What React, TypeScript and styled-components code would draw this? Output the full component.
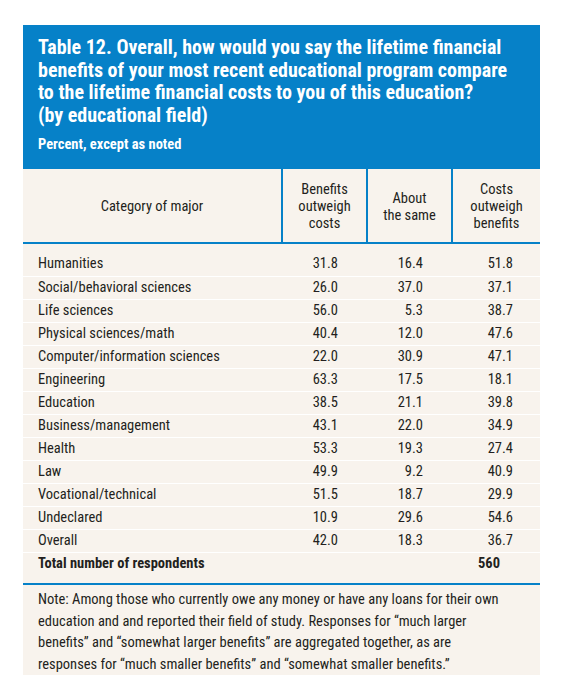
import React from "react";
import styled, { createGlobalStyle } from "styled-components";

const Global = createGlobalStyle`
  html, body { margin: 0; padding: 0; background: #ffffff; }
  body { font-family: Roboto, "Liberation Sans", Arial, sans-serif; }
`;

const BLUE = "#0681c8";
const CREAM = "#f8f3ed";
const INK = "#231f20";

const Panel = styled.section`
  margin: 25px 0 0 23px;
  width: 517px;
  background: ${CREAM};
  font-family: Roboto, "Liberation Sans", Arial, sans-serif;
  font-stretch: 80%;
  color: ${INK};
`;

const Header = styled.header`
  background: ${BLUE};
  color: #ffffff;
  height: 144px;
  box-sizing: border-box;
  padding: 11px 15px 0 15px;
`;

const Title = styled.h1`
  margin: 0;
  font-size: 20px;
  line-height: 22.5px;
  font-weight: 700;
  font-stretch: 77%;
  white-space: nowrap;
`;

const Subtitle = styled.p`
  margin: 10px 0 0 0;
  font-size: 14.5px;
  line-height: 18px;
  font-weight: 700;
  font-stretch: 76%;
`;

const Table = styled.table`
  width: 100%;
  border-collapse: collapse;
  table-layout: fixed;
  font-size: 14.5px;
`;

const HeadCell = styled.th<{ $w: number; $divider?: boolean }>`
  width: ${(p) => p.$w}px;
  height: 74px;
  padding: 2px 4px 0 4px;
  box-sizing: border-box;
  font-weight: 400;
  text-align: center;
  vertical-align: middle;
  line-height: 17px;
  border-bottom: 2px solid ${BLUE};
  border-left: ${(p) => (p.$divider ? `2px solid ${BLUE}` : "none")};
`;

const Spacer = styled.tr`
  height: 10px;
`;

const Row = styled.tr<{ $last?: boolean }>`
  height: 23px;
  border-bottom: ${(p) => (p.$last ? "none" : "1px solid #ffffff")};
`;

const NameCell = styled.td<{ $bold?: boolean }>`
  padding: 0 0 0 15px;
  text-align: left;
  line-height: 22px;
  font-weight: ${(p) => (p.$bold ? 700 : 400)};
  white-space: nowrap;
`;

const NumCell = styled.td<{ $pad: number; $bold?: boolean }>`
  padding: 0 ${(p) => p.$pad}px 0 0;
  text-align: right;
  line-height: 22px;
  font-weight: ${(p) => (p.$bold ? 700 : 400)};
`;

const BottomGap = styled.tr`
  height: 9px;
  border-bottom: 2px solid ${BLUE};
`;

const Note = styled.p`
  margin: 0;
  padding: 4px 15px 0 15px;
  font-size: 14.5px;
  line-height: 21.5px;
  white-space: nowrap;
`;

const rows: [string, string, string, string][] = [
  ["Humanities", "31.8", "16.4", "51.8"],
  ["Social/behavioral sciences", "26.0", "37.0", "37.1"],
  ["Life sciences", "56.0", "5.3", "38.7"],
  ["Physical sciences/math", "40.4", "12.0", "47.6"],
  ["Computer/information sciences", "22.0", "30.9", "47.1"],
  ["Engineering", "63.3", "17.5", "18.1"],
  ["Education", "38.5", "21.1", "39.8"],
  ["Business/management", "43.1", "22.0", "34.9"],
  ["Health", "53.3", "19.3", "27.4"],
  ["Law", "49.9", "9.2", "40.9"],
  ["Vocational/technical", "51.5", "18.7", "29.9"],
  ["Undeclared", "10.9", "29.6", "54.6"],
  ["Overall", "42.0", "18.3", "36.7"],
];

export default function App() {
  return (
    <>
      <Global />
      <Panel>
        <Header>
          <Title>
            Table 12. Overall, how would you say the lifetime financial
            <br />
            benefits of your most recent educational program compare
            <br />
            to the lifetime financial costs to you of this education?
            <br />
            (by educational field)
          </Title>
          <Subtitle>Percent, except as noted</Subtitle>
        </Header>
        <Table>
          <thead>
            <tr>
              <HeadCell $w={259}>Category of major</HeadCell>
              <HeadCell $w={85} $divider>
                Benefits
                <br />
                outweigh
                <br />
                costs
              </HeadCell>
              <HeadCell $w={85} $divider>
                About
                <br />
                the same
              </HeadCell>
              <HeadCell $w={88} $divider>
                Costs
                <br />
                outweigh
                <br />
                benefits
              </HeadCell>
            </tr>
          </thead>
          <tbody>
            <Spacer />
            {rows.map(([name, a, b, c]) => (
              <Row key={name}>
                <NameCell>{name}</NameCell>
                <NumCell $pad={29}>{a}</NumCell>
                <NumCell $pad={29}>{b}</NumCell>
                <NumCell $pad={27}>{c}</NumCell>
              </Row>
            ))}
            <Row $last>
              <NameCell $bold colSpan={3}>
                Total number of respondents
              </NameCell>
              <NumCell $pad={40} $bold>
                560
              </NumCell>
            </Row>
            <BottomGap>
              <td colSpan={4} />
            </BottomGap>
          </tbody>
        </Table>
        <Note>
          Note: Among those who currently owe any money or have any loans for their own
          <br />
          education and and reported their field of study. Responses for “much larger
          <br />
          benefits” and “somewhat larger benefits” are aggregated together, as are
          <br />
          responses for “much smaller benefits” and “somewhat smaller benefits.”
        </Note>
      </Panel>
    </>
  );
}
